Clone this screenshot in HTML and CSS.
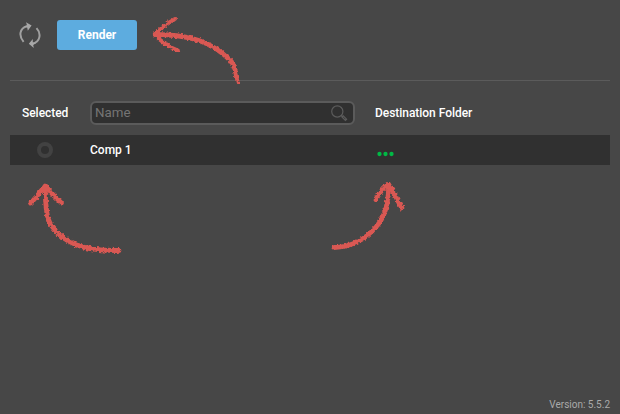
FILE: index.html
```html
<!DOCTYPE html>
<html lang="en">
<head>
<meta charset="utf-8">
<title>Render queue</title>
<link rel="stylesheet" href="styles.css">
</head>
<body>
<main class="panel">
  <header class="toolbar">
    <svg class="refresh" viewBox="0 0 22 26" aria-hidden="true">
      <path d="M4.6 19.800C-.3 14.200.2 6.300 8 4.200M17.500 6.100C22.300 11.100 21.800 19.900 13.200 21.700"/>
      <path class="solid" d="M7 .2 12.600 3.600 8.800 8.800 8.200 5.600 5.200 4.600 8 3.200ZM9.800 21.700 13.800 17 13.800 20.400 17 21 14.200 23 14.800 26Z"/>
    </svg>
    <button class="render">Render</button>
  </header>
  <section class="grid head">
    <span class="selected">Selected</span>
    <div class="search">
      <input class="field" type="text" placeholder="Name" aria-label="Name">
      <svg class="lens" viewBox="0 0 18 18" aria-hidden="true">
        <circle cx="7.300" cy="7.500" r="5.600"/>
        <path d="M11 11.400 12.300 12.500M12 13 13.200 11.800 16.600 15.200 15.400 16.400Z"/>
      </svg>
    </div>
    <span>Destination Folder</span>
  </section>
  <section class="grid row">
    <span class="radio"></span>
    <span>Comp 1</span>
    <svg class="dots" viewBox="0 0 18 6" aria-hidden="true">
      <circle cx="2.500" cy="3" r="2.150"/>
      <circle cx="8.500" cy="3" r="2.150"/>
      <circle cx="14.500" cy="3" r="2.150"/>
    </svg>
  </section>
  <footer class="version">Version: 5.5.2</footer>
</main>
<svg class="notes" viewBox="0 0 620 414" aria-hidden="true">
  <defs>
    <filter id="chalk" filterUnits="userSpaceOnUse" x="0" y="0" width="620" height="414" color-interpolation-filters="sRGB">
      <feTurbulence type="fractalNoise" baseFrequency=".4" numOctaves="2" seed="4"/>
      <feDisplacementMap in="SourceGraphic" scale="4" xChannelSelector="R" yChannelSelector="G"/>
    </filter>
  </defs>
  <g filter="url(#chalk)">
    <path d="M155 34.500C168 34.500 184 35.500 199 40.500C212 45 223 53 231 61C235 66 235.500 71 236.500 76"/>
    <path class="thin" d="M236 73 237.500 82M175 19C166 24 160 29 155 34.500C161 42 169 47 178 50.500"/>
    <path d="M45.500 186C45 203 46 217 51 225C63 243 83 251 119 250.500"/>
    <path d="M30.500 203C37 197 41 190 45.500 186C51 193 57 199 61.500 203"/>
    <path d="M388.500 184.500C389 203 384 218 376 227C364 241 351 247 334 247.500"/>
    <path d="M376 199C380 192 384 187 388.500 184.500C394 191 397 201 402 208"/>
  </g>
</svg>
</body>
</html>
```

FILE: styles.css
```css
* {
  box-sizing: border-box;
}

body {
  margin: 0;
  background: #474747;
  color: #fff;
  font: 500 12px/16px Roboto, sans-serif;
}

.panel {
  display: flex;
  flex-direction: column;
  height: 414px;
  padding: 0 10px;
}

.toolbar {
  display: flex;
  align-items: center;
  gap: 16px;
  height: 81px;
  padding: 0 0 10px 9px;
  border-bottom: 1px solid #5b5b5b;
}

.refresh {
  width: 22px;
  height: 26px;
  fill: none;
  stroke: #a0a0a0;
  stroke-width: 2;
}

.refresh .solid {
  fill: #a8a8a8;
  stroke: none;
}

.render {
  width: 80px;
  height: 30px;
  padding: 0;
  border: 0;
  border-radius: 3px;
  background: #5dacdf;
  color: #fff;
  font: 700 12px/30px Roboto, sans-serif;
}

.grid {
  display: grid;
  grid-template-columns: 80px 285px 1fr;
  align-items: center;
}

.head {
  height: 54px;
  padding-top: 10px;
  letter-spacing: -.04px;
}

.selected {
  padding-left: 12px;
}

.search {
  display: flex;
  align-items: center;
  width: 265px;
  height: 24px;
  padding: 0 5px 0 3px;
  border: 2px solid #5b5b5b;
  border-radius: 6px;
  background: #303030;
}

.field {
  flex: 1;
  min-width: 0;
  padding: 0;
  border: 0;
  outline: 0;
  background: none;
  color: #fff;
  font: 400 13.333px/18px Roboto, sans-serif;
}

.field::placeholder {
  color: #757575;
}

.lens {
  width: 18px;
  height: 18px;
  fill: none;
  stroke: #5c5c5c;
  stroke-width: 1.2;
}

.row {
  height: 30px;
  background: #303030;
}

.radio {
  width: 16px;
  height: 16px;
  margin-left: 27px;
  border: 4px solid #424242;
  border-radius: 50%;
}

.dots {
  width: 18px;
  height: 6px;
  margin: 8px 0 0 2px;
  fill: #00b945;
}

.version {
  margin-top: auto;
  padding-bottom: 1px;
  color: #aaa;
  font-size: 10px;
  font-weight: 400;
  text-align: right;
}

.notes {
  position: absolute;
  inset: 0;
  width: 620px;
  height: 414px;
  fill: none;
  stroke: #d95853;
  stroke-width: 4.8;
  stroke-linecap: round;
  stroke-linejoin: round;
  pointer-events: none;
}

.notes .thin {
  stroke-width: 3.8;
}
```
